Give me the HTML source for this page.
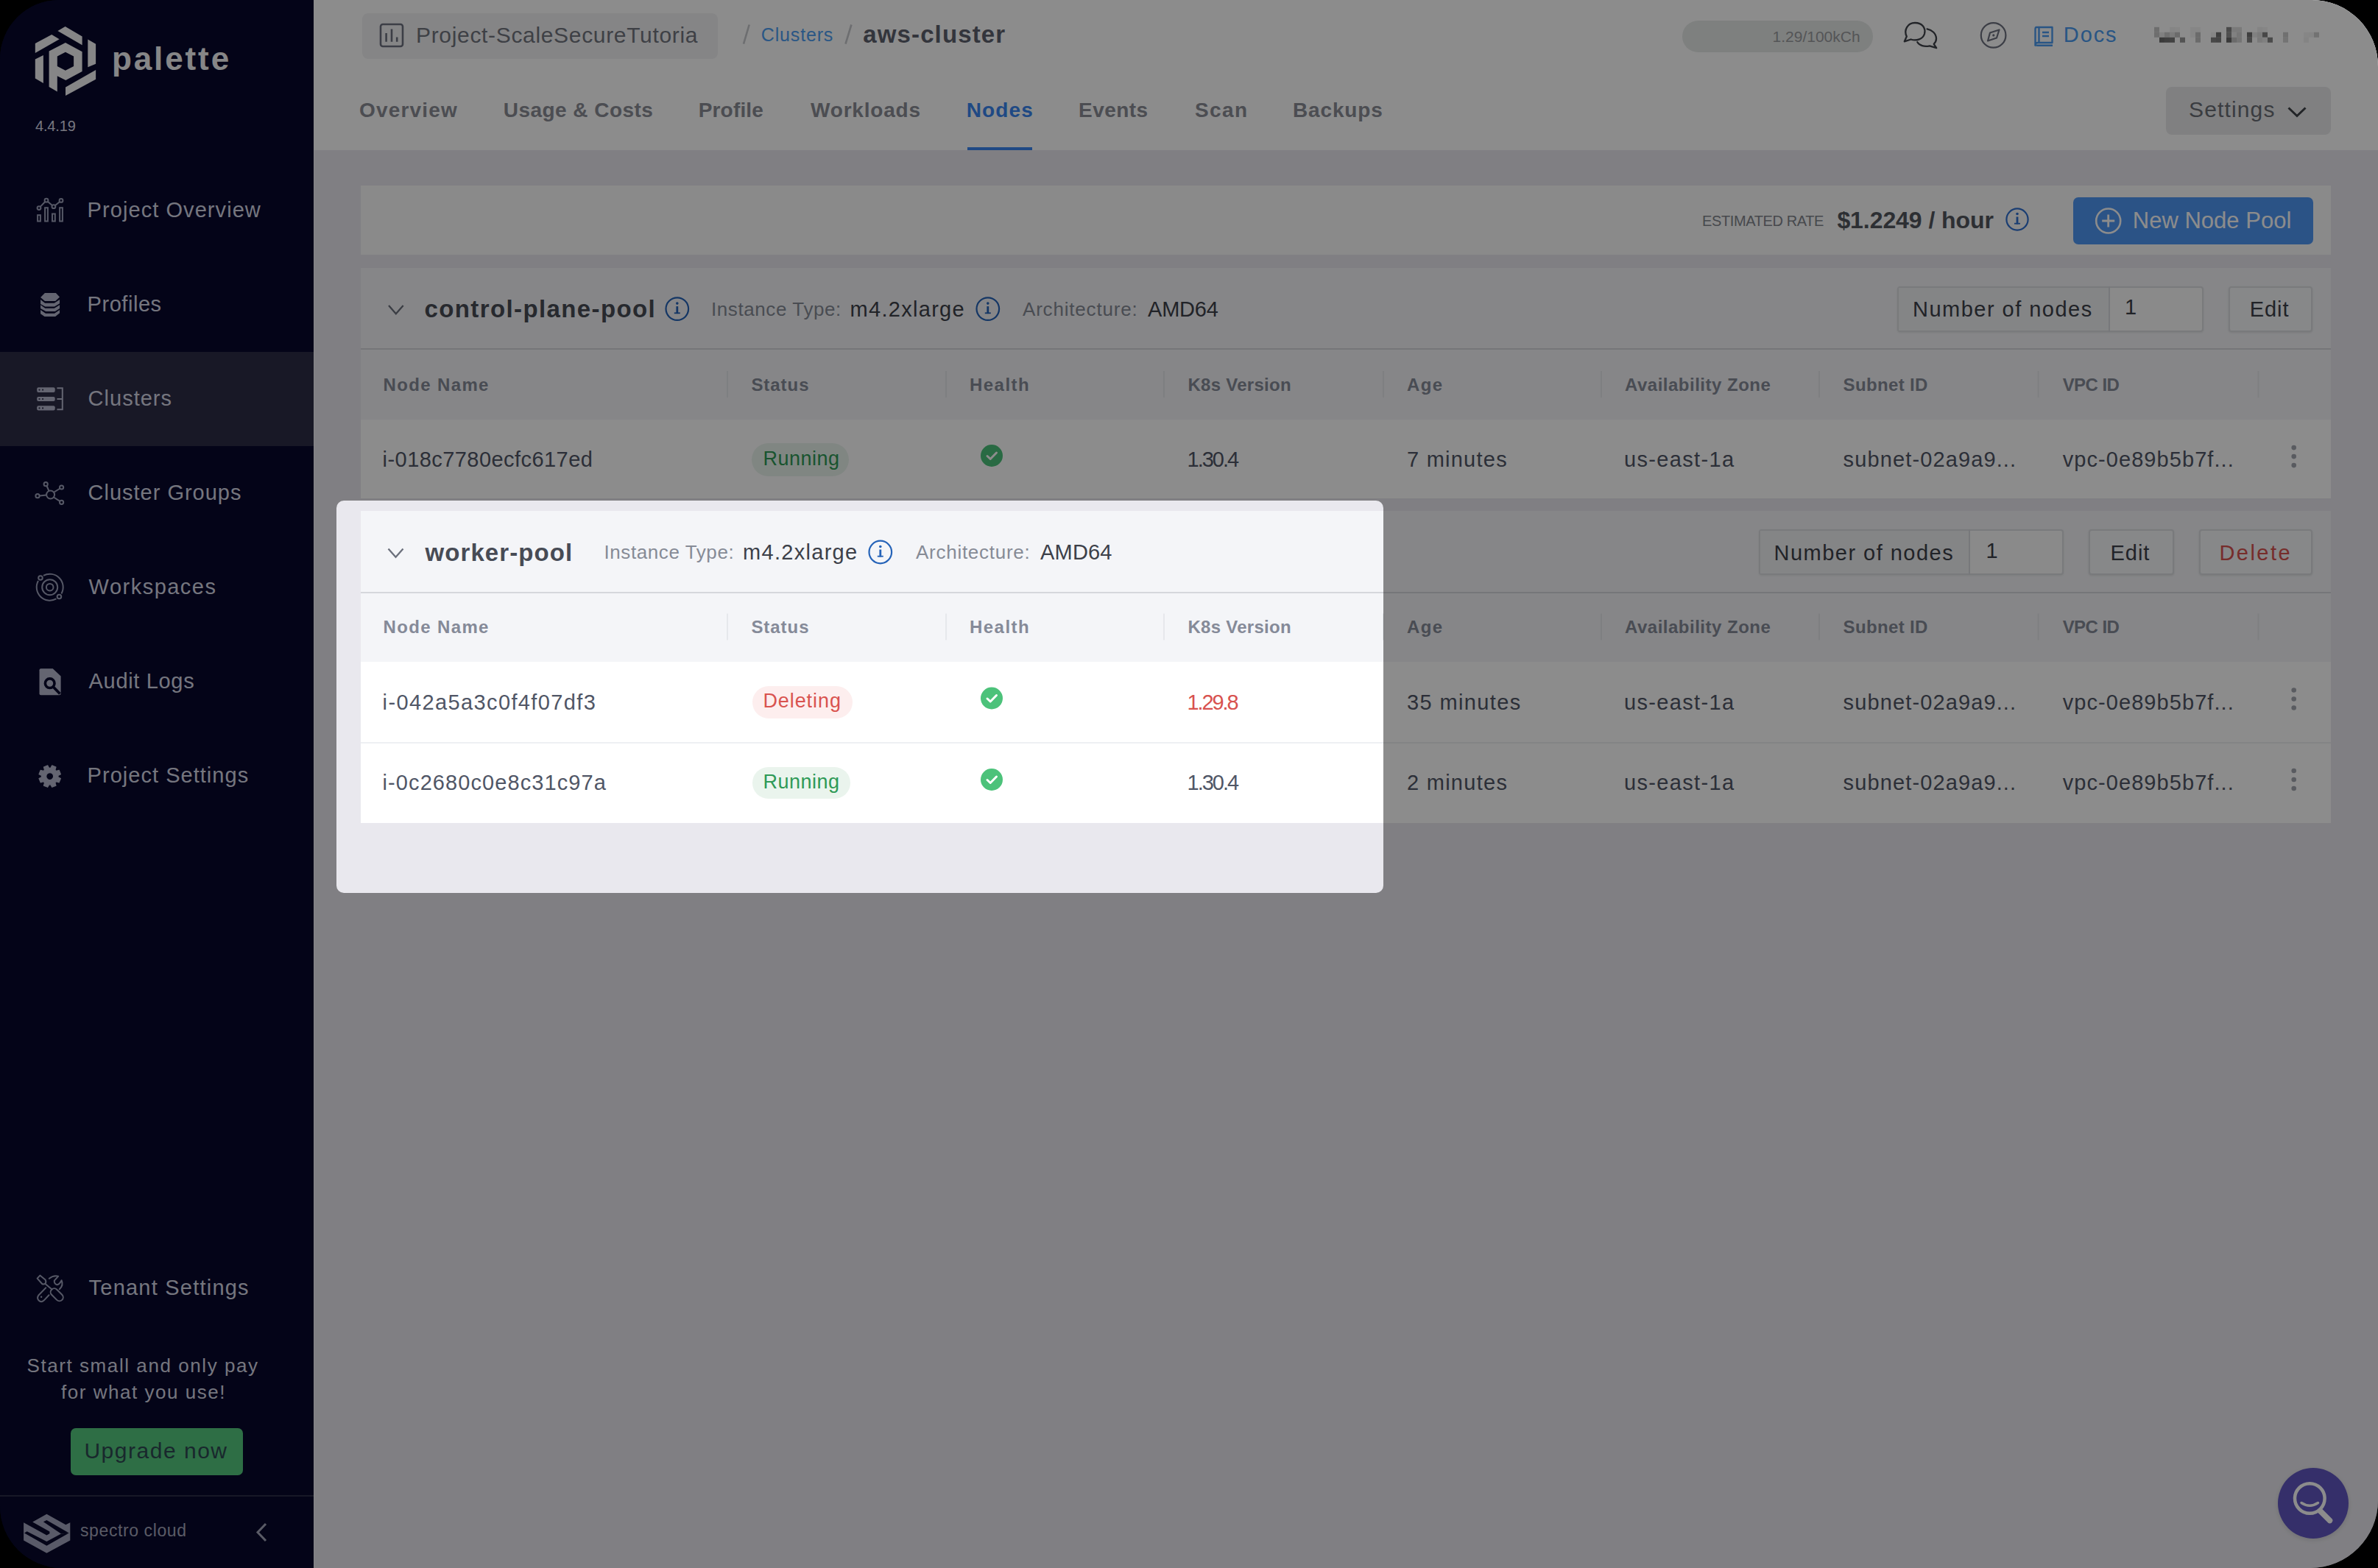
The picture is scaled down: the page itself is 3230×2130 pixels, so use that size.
<!DOCTYPE html>
<html><head><meta charset="utf-8">
<style>
html,body{margin:0;padding:0;background:#000;width:3230px;height:2130px;overflow:hidden}
#scr{position:absolute;left:0;top:0;width:3230px;height:2130px;overflow:hidden;background:#000;border-radius:80px 90px 92px 84px;font-family:"Liberation Sans", sans-serif}
.b{position:absolute;box-sizing:border-box}
.t{position:absolute;white-space:nowrap;font-family:"Liberation Sans", sans-serif}
svg.ic{position:absolute;left:0;top:0;width:3230px;height:2130px;overflow:visible}
#spot{position:absolute;left:457px;top:679.5px;width:1421.5px;height:533.5px;border-radius:10px;box-shadow:0 0 0 6000px rgba(0,0,0,0.45);z-index:50}
</style></head><body>
<div id="scr">
<div class="b" style="left:426px;top:0;width:2804px;height:2130px;background:#e9e8ee"></div>
<!-- sidebar -->
<div class="b" style="left:0;top:0;width:426px;height:2130px;background:#08092c"></div>
<div class="b" style="left:425.5px;top:0;width:1.5px;height:2130px;background:#f4f4f8"></div>
<div class="b" style="left:0;top:478px;width:426px;height:128px;background:#2d2c46"></div>
<div class="b" style="left:0;top:2031px;width:426px;height:2px;background:#2a2c48"></div>
<div class="b" style="left:96px;top:1940px;width:234px;height:64px;border-radius:7px;background:#55c97f"></div>
<!-- header -->
<div class="b" style="left:426px;top:0;width:2804px;height:204px;background:#ffffff"></div>
<div class="b" style="left:491.5px;top:17.5px;width:483.5px;height:62px;border-radius:8px;background:#f3f3f5"></div>
<div class="b" style="left:2285px;top:28px;width:258.5px;height:43px;border-radius:22px;background:#e6e9e8"></div>
<div class="b" style="left:2749.5px;top:16.5px;width:155.5px;height:63.5px;border-radius:6px;background:#ffffff"></div>
<div class="b" style="left:2942px;top:118px;width:224px;height:64.5px;border-radius:8px;background:#e9eaeb"></div>
<div class="b" style="left:1313.6px;top:200px;width:88.4px;height:4px;background:#3a86f0"></div>
<!-- rate bar -->
<div class="b" style="left:490px;top:252px;width:2676px;height:94px;background:#fbfbfc"></div>
<div class="b" style="left:2816px;top:268px;width:326px;height:63.5px;border-radius:7px;background:#4f97f5"></div>
<!-- control plane card -->
<div class="b" style="left:490px;top:364px;width:2676px;height:110px;background:#f4f5f8"></div>
<div class="b" style="left:490px;top:473px;width:2676px;height:2px;background:#d5d7dc"></div>
<div class="b" style="left:490px;top:475px;width:2676px;height:95px;background:#f4f5f8"></div>
<div class="b" style="left:490px;top:570px;width:2676px;height:107px;background:#ffffff"></div>
<div class="b" style="left:2577px;top:389px;width:416px;height:62px;border:2px solid #dcdee2;border-radius:4px;background:#fbfbfc;box-shadow:0 1px 3px rgba(0,0,0,0.08)"></div>
<div class="b" style="left:2579px;top:391px;width:286px;height:58px;background:#f1f2f4"></div>
<div class="b" style="left:2864px;top:389px;width:2px;height:62px;background:#d9dbe0"></div>
<div class="b" style="left:3027px;top:389px;width:114px;height:62px;border:2px solid #dcdee2;border-radius:4px;background:#f6f7f9;box-shadow:0 1px 3px rgba(0,0,0,0.1)"></div>
<div class="b" style="left:1021px;top:601.6px;width:131.6px;height:45px;border-radius:23px;background:#eaf4ed"></div>
<!-- worker card -->
<div class="b" style="left:490px;top:693.8px;width:2676px;height:110.2px;background:#f4f5f8"></div>
<div class="b" style="left:490px;top:804px;width:2676px;height:2px;background:#d5d7dc"></div>
<div class="b" style="left:490px;top:806px;width:2676px;height:93px;background:#f4f5f8"></div>
<div class="b" style="left:490px;top:899px;width:2676px;height:219px;background:#ffffff"></div>
<div class="b" style="left:490px;top:1008px;width:2676px;height:2px;background:#eef0f3"></div>
<div class="b" style="left:2388.5px;top:719px;width:414.5px;height:61.6px;border:2px solid #dcdee2;border-radius:4px;background:#fbfbfc;box-shadow:0 1px 3px rgba(0,0,0,0.08)"></div>
<div class="b" style="left:2390.5px;top:721px;width:284px;height:57.6px;background:#f1f2f4"></div>
<div class="b" style="left:2673.6px;top:719px;width:2px;height:61.6px;background:#d9dbe0"></div>
<div class="b" style="left:2836.5px;top:719px;width:116px;height:61.6px;border:2px solid #dcdee2;border-radius:4px;background:#f6f7f9;box-shadow:0 1px 3px rgba(0,0,0,0.1)"></div>
<div class="b" style="left:2987.4px;top:719px;width:153.8px;height:61.6px;border:2px solid #dcdee2;border-radius:4px;background:#f6f7f9;box-shadow:0 1px 3px rgba(0,0,0,0.1)"></div>
<div class="b" style="left:1022px;top:932px;width:136px;height:44px;border-radius:22px;background:#fdeeee"></div>
<div class="b" style="left:1022px;top:1042px;width:133px;height:43px;border-radius:22px;background:#eaf4ed"></div>
<!-- FAB -->
<div class="b" style="left:3094px;top:1993.6px;width:96px;height:96px;border-radius:48px;background:#6157c2;box-shadow:0 2px 6px rgba(0,0,0,0.12)"></div>

<svg class="ic" viewBox="0 0 3230 2130">
 <!-- logo -->
 <g fill="#f4f4f6">
  <path d="M78.4,42.1 L88.6,36.1 L111.6,49.5 L111.6,61.2 Z"/>
  <path d="M47.8,58.9 L70.2,46.9 L80.6,53.3 L47.8,72.1 Z"/>
  <path d="M47.8,80.6 L58.9,75 L58.9,112.9 L47.8,106.5 Z"/>
  <path fill-rule="evenodd" d="M66.6,69.5 L88.9,58 L111.6,70.2 L111.6,96.9 L89.3,109 L77.8,103.3 L77.8,124.4 L66.6,118 Z M77.8,76.5 L88.9,70.8 L100.1,76.5 L100.1,89.9 L88.9,95.7 L77.8,89.9 Z"/>
  <path d="M119.3,53.6 L130.1,59.7 L130.1,86.7 L119.3,91.2 Z"/>
  <path d="M89,118.6 L130.1,95 L130.1,107.8 L89,130.1 Z"/>
 </g>
 <!-- nav icons -->
 <g stroke="#9da0ba" stroke-width="2" fill="none">
  <polyline points="53,282.6 63,272.2 72.9,280.7 83,272.4"/>
  <circle cx="53" cy="282.6" r="2.4" fill="#08092c"/><circle cx="63" cy="272.2" r="2.4" fill="#08092c"/><circle cx="72.9" cy="280.7" r="2.4" fill="#08092c"/><circle cx="83" cy="272.4" r="2.4" fill="#08092c"/>
  <rect x="51.1" y="292.2" width="3.8" height="8.3"/><rect x="61.1" y="282.2" width="3.8" height="18.3"/><rect x="71" y="290.5" width="3.8" height="10"/><rect x="81.1" y="282.2" width="3.8" height="18.3"/>
 </g>
 <!-- profiles stack -->
 <g fill="#b6b8ce">
  <path d="M55.06,404.08 L60.95,398.05 L75.89,398.05 L81.06,403.5 L75.17,408.97 L60.95,408.97 Z"/>
  <path d="M55.06,406.95 L61.09,411.84 L73.74,411.84 L81.06,406.95 L81.06,412.13 L74.02,416.44 L61.38,416.44 L55.06,412.99 Z"/>
  <path d="M55.06,414.14 L61.38,418.74 L73.74,418.74 L81.06,414.14 L81.06,419.02 L74.89,423.05 L62.24,423.05 L55.06,419.02 Z"/>
  <path d="M55.06,421.03 L61.95,425.63 L74.02,425.63 L81.06,421.03 L81.06,425.34 L75.17,429.94 L60.52,429.94 L55.06,426.21 Z"/>
 </g>
 <!-- clusters icon -->
 <g fill="#b6b8ce">
  <rect x="50.2" y="526.2" width="24.5" height="6.7" rx="2"/>
  <rect x="50.2" y="539" width="24.5" height="6" rx="2"/>
  <rect x="50.2" y="551.2" width="24.5" height="6.3" rx="2"/>
 </g>
 <g fill="#2b2c48"><circle cx="53.5" cy="529.6" r="1.1"/><circle cx="58.1" cy="529.6" r="1.1"/><circle cx="53.5" cy="542" r="1.1"/><circle cx="58.1" cy="542" r="1.1"/><circle cx="53.5" cy="554.4" r="1.1"/><circle cx="58.1" cy="554.4" r="1.1"/></g>
 <path d="M77.4,527.3 L84.8,527.3 L84.8,556.3 L77.4,556.3 M77.4,542 L84.8,542" stroke="#b6b8ce" stroke-width="2" fill="none"/>
 <!-- cluster groups -->
 <g stroke="#9da0ba" stroke-width="2" fill="none">
  <circle cx="68.6" cy="672" r="5.5"/>
  <circle cx="62.2" cy="657.7" r="2.6"/><circle cx="83.6" cy="662" r="2.6"/><circle cx="51" cy="673.7" r="2.6"/><circle cx="83.6" cy="682.3" r="2.6"/>
  <path d="M63.5,660 L66.5,667 M81.5,663.5 L73.5,668.5 M53.6,673.4 L63,672.6 M81.3,680.8 L73,675.5"/>
 </g>
 <!-- workspaces -->
 <g stroke="#9da0ba" stroke-width="2" fill="none">
  <path d="M58.97,781.96 A18.0,18.0 0 0 1 83.44,806.43"/>
  <path d="M76.43,813.44 A18.0,18.0 0 0 1 51.96,788.97"/>
  <circle cx="67.7" cy="797.7" r="10.5"/>
  <circle cx="67.7" cy="797.7" r="4.8"/>
  <circle cx="54.97" cy="784.97" r="2.8"/><circle cx="80.43" cy="810.43" r="2.8"/>
 </g>
 <!-- audit logs -->
 <path fill="#b6b8ce" d="M55.5,908.2 L71.7,908.2 L82.6,918.5 L82.6,942.3 Q82.6,944.3 80.6,944.3 L55.5,944.3 Q53.5,944.3 53.5,942.3 L53.5,910.2 Q53.5,908.2 55.5,908.2 Z"/>
 <circle cx="67.7" cy="928.2" r="6.3" stroke="#08092c" stroke-width="3.6" fill="none"/>
 <path d="M72.3,933 L81.5,942.5" stroke="#08092c" stroke-width="3.8"/>
 <!-- gear -->
 <g transform="translate(67.7,1054.6) rotate(22.5)">
  <path fill="#b6b8ce" fill-rule="evenodd" stroke="#b6b8ce" stroke-width="1.2" stroke-linejoin="round" d="M14.72,-2.86 L14.72,2.86 L10.81,3.30 L9.98,5.31 L12.44,8.39 L8.39,12.44 L5.31,9.98 L3.30,10.81 L2.86,14.72 L-2.86,14.72 L-3.30,10.81 L-5.31,9.98 L-8.39,12.44 L-12.44,8.39 L-9.98,5.31 L-10.81,3.30 L-14.72,2.86 L-14.72,-2.86 L-10.81,-3.30 L-9.98,-5.31 L-12.44,-8.39 L-8.39,-12.44 L-5.31,-9.98 L-3.30,-10.81 L-2.86,-14.72 L2.86,-14.72 L3.30,-10.81 L5.31,-9.98 L8.39,-12.44 L12.44,-8.39 L9.98,-5.31 L10.81,-3.30 Z M0,-5 A5,5 0 1 0 0.01,-5 Z"/>
 </g>
 <!-- tenant settings tools -->
 <g stroke="#9da0ba" stroke-width="2" fill="none" stroke-linejoin="round" stroke-linecap="round">
  <path d="M50.6,1736.6 L54.3,1732.6 L61.6,1738.6 Q63.2,1741.5 61.5,1743.6 Q59.5,1745 57.2,1744 Z"/>
  <path d="M61.5,1744 L70.5,1751.5"/>
  <rect x="-10" y="-5" width="20" height="10" rx="5" transform="translate(77.2,1758.8) rotate(45)"/>
  <path d="M62.2,1749.4 L52.6,1759.2 Q49.5,1763.5 52.6,1766.6 Q56,1769.8 59.6,1766.6 L66.5,1759.3"/>
  <path d="M66.8,1736.8 Q72.5,1732 79.2,1733.6 L73.8,1739.6 Q73.4,1744 77.5,1745.2 Q80.6,1745 83.6,1739.2 Q86.6,1746 80.8,1751.2"/>
 </g>
 <circle cx="56.1" cy="1761.7" r="1.2" fill="#9da0ba"/>
 <!-- spectro cloud logo -->
 <g fill="#a3a5bd">
  <path d="M32.1,2068.2 L63.4,2085.4 L67.4,2083.2 L67.4,2080.5 L44.2,2067.5 L63.4,2056.8 L89.3,2071.3 L95.3,2068.2 L95.3,2092.5 L63.4,2109.7 L32.1,2092.5 Z"/>
 </g>
 <g fill="#08092c">
  <path d="M33,2082.5 L36.6,2080.3 L63.4,2093.9 L83,2083.4 L93.75,2082.5 L63.4,2099.7 Z"/>
  <path d="M58.9,2067.3 L63.4,2065.1 L93.75,2082.5 L83,2083.4 Z"/>
 </g>
 <path d="M361,2070 L350,2081.5 L361,2093" stroke="#a5a7bb" stroke-width="3" fill="none"/>
 <!-- header: project icon -->
 <g stroke="#6e7280" stroke-width="2.6" fill="none">
  <rect x="517" y="33" width="30" height="30" rx="3"/>
  <path d="M524.6,45 L524.6,56.8 M532,39.5 L532,56.8 M539.2,50.5 L539.2,56.8"/>
 </g>
 <path d="M1017.7,33.5 L1010,59.6 M1156.4,33.5 L1148.5,59.6" stroke="#c6c8cd" stroke-width="2.6"/>
 <!-- chat icon -->
 <g stroke="#3f424a" stroke-width="2.3" fill="none" stroke-linejoin="round" stroke-linecap="round">
  <path d="M2589.8,49.5 C2585.5,41 2591,31 2601,31 C2611,31 2616,38 2614,46 C2612,53 2603,56 2595.5,53.5 L2586.8,56.3 Z"/>
  <path d="M2617.6,39.3 C2624,40.5 2630,45.5 2630,52.5 C2630,55.5 2628.5,58 2626.7,59.8 L2630.2,65.2 L2621,62.3 C2614,64 2607,62 2604.3,57.2"/>
 </g>
 <!-- compass -->
 <g stroke="#6e7280" stroke-width="2.2" fill="none" stroke-linejoin="round">
  <circle cx="2707.6" cy="47.9" r="16.8"/>
  <path d="M2700,55.5 L2703,44.5 L2715.5,40.5 L2712,51.5 Z"/>
 </g>
 <circle cx="2707.8" cy="47.9" r="1.6" fill="#6e7280"/>
 <!-- book icon -->
 <g stroke="#4c9cf0" stroke-width="2.4" fill="none" stroke-linejoin="round">
  <path d="M2766,37 L2787.5,37 L2787.5,58 L2768,58 Q2764.5,58 2764.5,61.5 L2764.5,40 Q2764.5,37 2766,37 Z"/>
  <path d="M2764.5,61.5 Q2764.5,61.7 2768,61.7 L2788,61.7 M2769.5,37 L2769.5,58 M2774,44 L2783,44 M2774,49 L2783,49"/>
 </g>
 <!-- settings chevron -->
 <path d="M3108.5,146.5 L3120,157.5 L3131.5,146.5" stroke="#3f4248" stroke-width="3" fill="none"/>
 <!-- rate info icon -->
 <circle cx="2740" cy="298" r="14.6" stroke="#2f6fd0" stroke-width="2.2" fill="none"/>
 <g fill="#2f6fd0"><circle cx="2740" cy="290.5" r="1.8"/><rect x="2738.6" y="294.5" width="2.8" height="10"/><rect x="2736" y="302.8" width="8" height="1.8"/></g>
 <!-- plus circle -->
 <circle cx="2863.7" cy="300" r="16.5" stroke="#ffffff" stroke-width="2.6" fill="none"/>
 <path d="M2863.7,291.5 L2863.7,308.5 M2855.2,300 L2872.2,300" stroke="#ffffff" stroke-width="2.8"/>
 <!-- chevrons in pool headers -->
 <path d="M528,415 L537.8,426.3 L547.7,415" stroke="#6b707c" stroke-width="2.3" fill="none"/>
 <path d="M527.5,745.4 L537.5,756.7 L547.5,745.4" stroke="#6b707c" stroke-width="2.3" fill="none"/>
 <!-- info icons pools -->
 <g id="inf">
 </g>
</svg>
<svg class="ic" viewBox="0 0 3230 2130"><circle cx="919.8" cy="419.6" r="15.3" stroke="#2563b8" stroke-width="2.2" fill="none"/>
<g fill="#2563b8"><circle cx="919.8" cy="412.1" r="1.8"/><rect x="918.4" y="416.1" width="2.8" height="10"/><rect x="915.8" y="424.40000000000003" width="8" height="1.8"/></g>
<circle cx="1341.8" cy="419.6" r="15.3" stroke="#2563b8" stroke-width="2.2" fill="none"/>
<g fill="#2563b8"><circle cx="1341.8" cy="412.1" r="1.8"/><rect x="1340.3999999999999" y="416.1" width="2.8" height="10"/><rect x="1337.8" y="424.40000000000003" width="8" height="1.8"/></g>
<circle cx="1195.8" cy="750" r="15.3" stroke="#2563b8" stroke-width="2.2" fill="none"/>
<g fill="#2563b8"><circle cx="1195.8" cy="742.5" r="1.8"/><rect x="1194.3999999999999" y="746.5" width="2.8" height="10"/><rect x="1191.8" y="754.8" width="8" height="1.8"/></g>
<rect x="987" y="504" width="2" height="36" fill="#e6e8ec"/>
<rect x="1284" y="504" width="2" height="36" fill="#e6e8ec"/>
<rect x="1580" y="504" width="2" height="36" fill="#e6e8ec"/>
<rect x="1878" y="504" width="2" height="36" fill="#e6e8ec"/>
<rect x="2174" y="504" width="2" height="36" fill="#e6e8ec"/>
<rect x="2470" y="504" width="2" height="36" fill="#e6e8ec"/>
<rect x="2767.6" y="504" width="2" height="36" fill="#e6e8ec"/>
<rect x="3066.5" y="504" width="2" height="36" fill="#e6e8ec"/>
<rect x="987" y="833.5" width="2" height="36" fill="#e6e8ec"/>
<rect x="1284" y="833.5" width="2" height="36" fill="#e6e8ec"/>
<rect x="1580" y="833.5" width="2" height="36" fill="#e6e8ec"/>
<rect x="1878" y="833.5" width="2" height="36" fill="#e6e8ec"/>
<rect x="2174" y="833.5" width="2" height="36" fill="#e6e8ec"/>
<rect x="2470" y="833.5" width="2" height="36" fill="#e6e8ec"/>
<rect x="2767.6" y="833.5" width="2" height="36" fill="#e6e8ec"/>
<rect x="3066.5" y="833.5" width="2" height="36" fill="#e6e8ec"/>
<circle cx="1347" cy="619" r="15" fill="#4cc27a"/>
<path d="M1341,619.5 L1345.2,623.5 L1353.5,615" stroke="#fff" stroke-width="3" fill="none" stroke-linecap="round" stroke-linejoin="round"/>
<circle cx="1347" cy="948.5" r="15" fill="#4cc27a"/>
<path d="M1341,949.0 L1345.2,953.0 L1353.5,944.5" stroke="#fff" stroke-width="3" fill="none" stroke-linecap="round" stroke-linejoin="round"/>
<circle cx="1347" cy="1059" r="15" fill="#4cc27a"/>
<path d="M1341,1059.5 L1345.2,1063.5 L1353.5,1055" stroke="#fff" stroke-width="3" fill="none" stroke-linecap="round" stroke-linejoin="round"/>
<circle cx="3115.7" cy="608.1" r="3.3" fill="#a3a7b0"/>
<circle cx="3115.7" cy="620.1" r="3.3" fill="#a3a7b0"/>
<circle cx="3115.7" cy="632.1" r="3.3" fill="#a3a7b0"/>
<circle cx="3115.7" cy="937.5" r="3.3" fill="#a3a7b0"/>
<circle cx="3115.7" cy="949.5" r="3.3" fill="#a3a7b0"/>
<circle cx="3115.7" cy="961.5" r="3.3" fill="#a3a7b0"/>
<circle cx="3115.7" cy="1047.0" r="3.3" fill="#a3a7b0"/>
<circle cx="3115.7" cy="1059.0" r="3.3" fill="#a3a7b0"/>
<circle cx="3115.7" cy="1071.0" r="3.3" fill="#a3a7b0"/>
<circle cx="3137.3" cy="2035.5" r="20.3" stroke="#fff" stroke-width="4.5" fill="none"/>
<path d="M3126,2041.5 Q3137.3,2049 3148.5,2041.5" stroke="#fff" stroke-width="3.5" fill="none" stroke-linecap="round"/>
<path d="M3151.5,2052.5 L3164.5,2065.5" stroke="#fff" stroke-width="7.5" stroke-linecap="round"/>
<rect x="2926" y="36.8" width="7" height="7" fill="rgb(200,200,200)"/>
<rect x="2947" y="36.8" width="7" height="7" fill="rgb(242,242,242)"/>
<rect x="2954" y="36.8" width="7" height="7" fill="rgb(244,244,244)"/>
<rect x="2975" y="36.8" width="7" height="7" fill="rgb(245,245,245)"/>
<rect x="2982" y="36.8" width="7" height="7" fill="rgb(245,245,245)"/>
<rect x="3024" y="36.8" width="7" height="7" fill="rgb(135,135,135)"/>
<rect x="3031" y="36.8" width="7" height="7" fill="rgb(222,222,222)"/>
<rect x="3038" y="36.8" width="7" height="7" fill="rgb(222,222,222)"/>
<rect x="3066" y="36.8" width="7" height="7" fill="rgb(240,240,240)"/>
<rect x="3073" y="36.8" width="7" height="7" fill="rgb(244,244,244)"/>
<rect x="2926" y="43.8" width="7" height="7" fill="rgb(200,200,200)"/>
<rect x="2933" y="43.8" width="7" height="7" fill="rgb(233,233,233)"/>
<rect x="2940" y="43.8" width="7" height="7" fill="rgb(204,204,204)"/>
<rect x="2947" y="43.8" width="7" height="7" fill="rgb(224,224,224)"/>
<rect x="2954" y="43.8" width="7" height="7" fill="rgb(195,195,195)"/>
<rect x="2975" y="43.8" width="7" height="7" fill="rgb(244,244,244)"/>
<rect x="2982" y="43.8" width="7" height="7" fill="rgb(196,196,196)"/>
<rect x="3003" y="43.8" width="7" height="7" fill="rgb(244,244,244)"/>
<rect x="3010" y="43.8" width="7" height="7" fill="rgb(115,115,115)"/>
<rect x="3024" y="43.8" width="7" height="7" fill="rgb(145,145,145)"/>
<rect x="3031" y="43.8" width="7" height="7" fill="rgb(236,236,236)"/>
<rect x="3038" y="43.8" width="7" height="7" fill="rgb(216,216,216)"/>
<rect x="3052" y="43.8" width="7" height="7" fill="rgb(115,115,115)"/>
<rect x="3059" y="43.8" width="7" height="7" fill="rgb(236,236,236)"/>
<rect x="3066" y="43.8" width="7" height="7" fill="rgb(222,222,222)"/>
<rect x="3073" y="43.8" width="7" height="7" fill="rgb(131,131,131)"/>
<rect x="3101" y="43.8" width="7" height="7" fill="rgb(204,204,204)"/>
<rect x="3129" y="43.8" width="7" height="7" fill="rgb(244,244,244)"/>
<rect x="3136" y="43.8" width="7" height="7" fill="rgb(242,242,242)"/>
<rect x="3143" y="43.8" width="7" height="7" fill="rgb(207,207,207)"/>
<rect x="2933" y="50.8" width="7" height="7" fill="rgb(107,107,107)"/>
<rect x="2940" y="50.8" width="7" height="7" fill="rgb(116,116,116)"/>
<rect x="2947" y="50.8" width="7" height="7" fill="rgb(120,120,120)"/>
<rect x="2961" y="50.8" width="7" height="7" fill="rgb(151,151,151)"/>
<rect x="2982" y="50.8" width="7" height="7" fill="rgb(196,196,196)"/>
<rect x="3003" y="50.8" width="7" height="7" fill="rgb(131,131,131)"/>
<rect x="3010" y="50.8" width="7" height="7" fill="rgb(127,127,127)"/>
<rect x="3024" y="50.8" width="7" height="7" fill="rgb(105,105,105)"/>
<rect x="3031" y="50.8" width="7" height="7" fill="rgb(195,195,195)"/>
<rect x="3038" y="50.8" width="7" height="7" fill="rgb(213,213,213)"/>
<rect x="3052" y="50.8" width="7" height="7" fill="rgb(131,131,131)"/>
<rect x="3066" y="50.8" width="7" height="7" fill="rgb(222,222,222)"/>
<rect x="3073" y="50.8" width="7" height="7" fill="rgb(233,233,233)"/>
<rect x="3080" y="50.8" width="7" height="7" fill="rgb(135,135,135)"/>
<rect x="3101" y="50.8" width="7" height="7" fill="rgb(211,211,211)"/>
<rect x="3129" y="50.8" width="7" height="7" fill="rgb(240,240,240)"/></svg>
<div class='t' style='left:152.0px;top:58.2px;font-size:44px;line-height:44px;font-weight:700;color:#f4f4f6;letter-spacing:2.88px;'>palette</div>
<div class='t' style='left:48.0px;top:161.0px;font-size:20px;line-height:20px;font-weight:400;color:#d9d9e7;letter-spacing:-0.16px;'>4.4.19</div>
<div class='t' style='left:118.6px;top:271.4px;font-size:29px;line-height:29px;font-weight:400;color:#d6d7e6;letter-spacing:1.07px;'>Project Overview</div>
<div class='t' style='left:118.6px;top:399.4px;font-size:29px;line-height:29px;font-weight:400;color:#d6d7e6;letter-spacing:0.54px;'>Profiles</div>
<div class='t' style='left:119.6px;top:527.4px;font-size:29px;line-height:29px;font-weight:400;color:#d6d7e6;letter-spacing:1.01px;'>Clusters</div>
<div class='t' style='left:119.6px;top:655.4px;font-size:29px;line-height:29px;font-weight:400;color:#d6d7e6;letter-spacing:0.99px;'>Cluster Groups</div>
<div class='t' style='left:120.6px;top:783.4px;font-size:29px;line-height:29px;font-weight:400;color:#d6d7e6;letter-spacing:1.48px;'>Workspaces</div>
<div class='t' style='left:120.6px;top:911.4px;font-size:29px;line-height:29px;font-weight:400;color:#d6d7e6;letter-spacing:0.67px;'>Audit Logs</div>
<div class='t' style='left:118.6px;top:1039.3px;font-size:29px;line-height:29px;font-weight:400;color:#d6d7e6;letter-spacing:1.03px;'>Project Settings</div>
<div class='t' style='left:120.6px;top:1735.3px;font-size:29px;line-height:29px;font-weight:400;color:#d6d7e6;letter-spacing:1.22px;'>Tenant Settings</div>
<div class='t' style='left:36.5px;top:1842.4px;font-size:26px;line-height:26px;font-weight:400;color:#d6d7e6;letter-spacing:1.57px;'>Start small and only pay</div>
<div class='t' style='left:83.0px;top:1877.9px;font-size:26px;line-height:26px;font-weight:400;color:#d6d7e6;letter-spacing:1.53px;'>for what you use!</div>
<div class='t' style='left:114.4px;top:1956.3px;font-size:30px;line-height:30px;font-weight:400;color:#2f4a52;letter-spacing:1.52px;'>Upgrade now</div>
<div class='t' style='left:109.0px;top:2068.4px;font-size:23px;line-height:23px;font-weight:400;color:#a5a7bb;letter-spacing:0.60px;'>spectro cloud</div>
<div class='t' style='left:565.0px;top:32.8px;font-size:30px;line-height:30px;font-weight:400;color:#72757f;letter-spacing:0.67px;'>Project-ScaleSecureTutoria</div>
<div class='t' style='left:1033.8px;top:34.5px;font-size:25px;line-height:25px;font-weight:400;color:#4e9ef2;letter-spacing:0.84px;'>Clusters</div>
<div class='t' style='left:1172.3px;top:30.2px;font-size:33px;line-height:33px;font-weight:700;color:#5d626d;letter-spacing:1.12px;'>aws-cluster</div>
<div class='t' style='left:2407.6px;top:38.5px;font-size:21px;line-height:21px;font-weight:400;color:#9a9b9e;letter-spacing:-0.01px;'>1.29/100kCh</div>
<div class='t' style='left:2802.8px;top:33.1px;font-size:29px;line-height:29px;font-weight:400;color:#4c9cf0;letter-spacing:1.90px;'>Docs</div>
<div class='t' style='left:488.0px;top:136.4px;font-size:28px;line-height:28px;font-weight:700;color:#8a8d96;letter-spacing:1.19px;'>Overview</div>
<div class='t' style='left:683.8px;top:136.4px;font-size:28px;line-height:28px;font-weight:700;color:#8a8d96;letter-spacing:0.45px;'>Usage &amp; Costs</div>
<div class='t' style='left:948.7px;top:136.4px;font-size:28px;line-height:28px;font-weight:700;color:#8a8d96;letter-spacing:0.18px;'>Profile</div>
<div class='t' style='left:1101.0px;top:136.4px;font-size:28px;line-height:28px;font-weight:700;color:#8a8d96;letter-spacing:0.81px;'>Workloads</div>
<div class='t' style='left:1312.7px;top:136.4px;font-size:28px;line-height:28px;font-weight:700;color:#3a86f0;letter-spacing:1.15px;'>Nodes</div>
<div class='t' style='left:1465.0px;top:136.4px;font-size:28px;line-height:28px;font-weight:700;color:#8a8d96;letter-spacing:0.47px;'>Events</div>
<div class='t' style='left:1623.0px;top:136.4px;font-size:28px;line-height:28px;font-weight:700;color:#8a8d96;letter-spacing:1.36px;'>Scan</div>
<div class='t' style='left:1756.0px;top:136.4px;font-size:28px;line-height:28px;font-weight:700;color:#8a8d96;letter-spacing:0.84px;'>Backups</div>
<div class='t' style='left:2973.0px;top:134.0px;font-size:30px;line-height:30px;font-weight:400;color:#6a6d75;letter-spacing:1.15px;'>Settings</div>
<div class='t' style='left:2312.0px;top:289.6px;font-size:20px;line-height:20px;font-weight:400;color:#82858c;letter-spacing:-0.39px;'>ESTIMATED RATE</div>
<div class='t' style='left:2495.4px;top:283.1px;font-size:32px;line-height:32px;font-weight:700;color:#52565d;letter-spacing:-0.07px;'>$1.2249 / hour</div>
<div class='t' style='left:2896.8px;top:283.9px;font-size:31px;line-height:31px;font-weight:400;color:#ffffff;letter-spacing:0.01px;'>New Node Pool</div>
<div class='t' style='left:576.5px;top:403.1px;font-size:33px;line-height:33px;font-weight:700;color:#474b55;letter-spacing:1.39px;'>control-plane-pool</div>
<div class='t' style='left:966.0px;top:406.5px;font-size:26px;line-height:26px;font-weight:400;color:#868b96;letter-spacing:0.59px;'>Instance Type:</div>
<div class='t' style='left:1154.5px;top:406.0px;font-size:29px;line-height:29px;font-weight:400;color:#3c4049;letter-spacing:1.30px;'>m4.2xlarge</div>
<div class='t' style='left:1389.0px;top:406.5px;font-size:26px;line-height:26px;font-weight:400;color:#868b96;letter-spacing:0.81px;'>Architecture:</div>
<div class='t' style='left:1559.0px;top:406.0px;font-size:29px;line-height:29px;font-weight:400;color:#3c4049;letter-spacing:-0.19px;'>AMD64</div>
<div class='t' style='left:577.5px;top:733.5px;font-size:33px;line-height:33px;font-weight:700;color:#474b55;letter-spacing:1.08px;'>worker-pool</div>
<div class='t' style='left:820.5px;top:736.9px;font-size:26px;line-height:26px;font-weight:400;color:#868b96;letter-spacing:0.58px;'>Instance Type:</div>
<div class='t' style='left:1009.0px;top:736.4px;font-size:29px;line-height:29px;font-weight:400;color:#3c4049;letter-spacing:1.30px;'>m4.2xlarge</div>
<div class='t' style='left:1244.0px;top:736.9px;font-size:26px;line-height:26px;font-weight:400;color:#868b96;letter-spacing:0.73px;'>Architecture:</div>
<div class='t' style='left:1413.0px;top:736.4px;font-size:29px;line-height:29px;font-weight:400;color:#3c4049;letter-spacing:0.19px;'>AMD64</div>
<div class='t' style='left:2598.0px;top:406.0px;font-size:29px;line-height:29px;font-weight:400;color:#3c4049;letter-spacing:1.48px;'>Number of nodes</div>
<div class='t' style='left:2886.0px;top:403.4px;font-size:29px;line-height:29px;font-weight:400;color:#3c4049;letter-spacing:0.00px;'>1</div>
<div class='t' style='left:3055.7px;top:406.0px;font-size:29px;line-height:29px;font-weight:400;color:#3c4049;letter-spacing:0.96px;'>Edit</div>
<div class='t' style='left:2409.5px;top:736.6px;font-size:29px;line-height:29px;font-weight:400;color:#3c4049;letter-spacing:1.48px;'>Number of nodes</div>
<div class='t' style='left:2697.5px;top:734.0px;font-size:29px;line-height:29px;font-weight:400;color:#3c4049;letter-spacing:0.00px;'>1</div>
<div class='t' style='left:2866.5px;top:736.6px;font-size:29px;line-height:29px;font-weight:400;color:#3c4049;letter-spacing:0.96px;'>Edit</div>
<div class='t' style='left:3014.4px;top:736.6px;font-size:29px;line-height:29px;font-weight:400;color:#d8524f;letter-spacing:2.49px;'>Delete</div>
<div class='t' style='left:520.6px;top:510.6px;font-size:24px;line-height:24px;font-weight:700;color:#858a98;letter-spacing:1.35px;'>Node Name</div>
<div class='t' style='left:1020.4px;top:510.6px;font-size:24px;line-height:24px;font-weight:700;color:#858a98;letter-spacing:0.95px;'>Status</div>
<div class='t' style='left:1317.0px;top:510.6px;font-size:24px;line-height:24px;font-weight:700;color:#858a98;letter-spacing:1.45px;'>Health</div>
<div class='t' style='left:1613.5px;top:510.6px;font-size:24px;line-height:24px;font-weight:700;color:#858a98;letter-spacing:0.27px;'>K8s Version</div>
<div class='t' style='left:1911.0px;top:510.6px;font-size:24px;line-height:24px;font-weight:700;color:#858a98;letter-spacing:1.42px;'>Age</div>
<div class='t' style='left:2207.0px;top:510.6px;font-size:24px;line-height:24px;font-weight:700;color:#858a98;letter-spacing:0.50px;'>Availability Zone</div>
<div class='t' style='left:2503.6px;top:510.6px;font-size:24px;line-height:24px;font-weight:700;color:#858a98;letter-spacing:0.34px;'>Subnet ID</div>
<div class='t' style='left:2801.7px;top:510.6px;font-size:24px;line-height:24px;font-weight:700;color:#858a98;letter-spacing:-0.58px;'>VPC ID</div>
<div class='t' style='left:520.6px;top:840.1px;font-size:24px;line-height:24px;font-weight:700;color:#858a98;letter-spacing:1.35px;'>Node Name</div>
<div class='t' style='left:1020.4px;top:840.1px;font-size:24px;line-height:24px;font-weight:700;color:#858a98;letter-spacing:0.95px;'>Status</div>
<div class='t' style='left:1317.0px;top:840.1px;font-size:24px;line-height:24px;font-weight:700;color:#858a98;letter-spacing:1.45px;'>Health</div>
<div class='t' style='left:1613.5px;top:840.1px;font-size:24px;line-height:24px;font-weight:700;color:#858a98;letter-spacing:0.27px;'>K8s Version</div>
<div class='t' style='left:1911.0px;top:840.1px;font-size:24px;line-height:24px;font-weight:700;color:#858a98;letter-spacing:1.42px;'>Age</div>
<div class='t' style='left:2207.0px;top:840.1px;font-size:24px;line-height:24px;font-weight:700;color:#858a98;letter-spacing:0.50px;'>Availability Zone</div>
<div class='t' style='left:2503.6px;top:840.1px;font-size:24px;line-height:24px;font-weight:700;color:#858a98;letter-spacing:0.34px;'>Subnet ID</div>
<div class='t' style='left:2801.7px;top:840.1px;font-size:24px;line-height:24px;font-weight:700;color:#858a98;letter-spacing:-0.58px;'>VPC ID</div>
<div class='t' style='left:519.6px;top:610.2px;font-size:29px;line-height:29px;font-weight:400;color:#505666;letter-spacing:0.44px;'>i-018c7780ecfc617ed</div>
<div class='t' style='left:1612.5px;top:610.2px;font-size:29px;line-height:29px;font-weight:400;color:#505666;letter-spacing:-1.99px;'>1.30.4</div>
<div class='t' style='left:1911.0px;top:610.2px;font-size:29px;line-height:29px;font-weight:400;color:#505666;letter-spacing:1.24px;'>7 minutes</div>
<div class='t' style='left:2206.0px;top:610.2px;font-size:29px;line-height:29px;font-weight:400;color:#505666;letter-spacing:1.34px;'>us-east-1a</div>
<div class='t' style='left:2503.6px;top:610.2px;font-size:29px;line-height:29px;font-weight:400;color:#505666;letter-spacing:1.12px;'>subnet-02a9a9...</div>
<div class='t' style='left:2801.7px;top:610.2px;font-size:29px;line-height:29px;font-weight:400;color:#505666;letter-spacing:1.07px;'>vpc-0e89b5b7f...</div>
<div class='t' style='left:519.6px;top:939.6px;font-size:29px;line-height:29px;font-weight:400;color:#505666;letter-spacing:1.38px;'>i-042a5a3c0f4f07df3</div>
<div class='t' style='left:1612.5px;top:939.6px;font-size:29px;line-height:29px;font-weight:400;color:#d8524f;letter-spacing:-2.09px;'>1.29.8</div>
<div class='t' style='left:1911.0px;top:939.6px;font-size:29px;line-height:29px;font-weight:400;color:#505666;letter-spacing:1.37px;'>35 minutes</div>
<div class='t' style='left:2206.0px;top:939.6px;font-size:29px;line-height:29px;font-weight:400;color:#505666;letter-spacing:1.34px;'>us-east-1a</div>
<div class='t' style='left:2503.6px;top:939.6px;font-size:29px;line-height:29px;font-weight:400;color:#505666;letter-spacing:1.12px;'>subnet-02a9a9...</div>
<div class='t' style='left:2801.7px;top:939.6px;font-size:29px;line-height:29px;font-weight:400;color:#505666;letter-spacing:1.07px;'>vpc-0e89b5b7f...</div>
<div class='t' style='left:519.6px;top:1049.1px;font-size:29px;line-height:29px;font-weight:400;color:#505666;letter-spacing:1.08px;'>i-0c2680c0e8c31c97a</div>
<div class='t' style='left:1612.5px;top:1049.1px;font-size:29px;line-height:29px;font-weight:400;color:#505666;letter-spacing:-1.99px;'>1.30.4</div>
<div class='t' style='left:1911.0px;top:1049.1px;font-size:29px;line-height:29px;font-weight:400;color:#505666;letter-spacing:1.27px;'>2 minutes</div>
<div class='t' style='left:2206.0px;top:1049.1px;font-size:29px;line-height:29px;font-weight:400;color:#505666;letter-spacing:1.34px;'>us-east-1a</div>
<div class='t' style='left:2503.6px;top:1049.1px;font-size:29px;line-height:29px;font-weight:400;color:#505666;letter-spacing:1.12px;'>subnet-02a9a9...</div>
<div class='t' style='left:2801.7px;top:1049.1px;font-size:29px;line-height:29px;font-weight:400;color:#505666;letter-spacing:1.07px;'>vpc-0e89b5b7f...</div>
<div class='t' style='left:1036.4px;top:609.8px;font-size:27px;line-height:27px;font-weight:400;color:#2f9a57;letter-spacing:0.49px;'>Running</div>
<div class='t' style='left:1036.4px;top:939.3px;font-size:27px;line-height:27px;font-weight:400;color:#d9534f;letter-spacing:0.92px;'>Deleting</div>
<div class='t' style='left:1036.4px;top:1049.3px;font-size:27px;line-height:27px;font-weight:400;color:#2f9a57;letter-spacing:0.49px;'>Running</div>
<div id="spot"></div>
</div>
</body></html>
